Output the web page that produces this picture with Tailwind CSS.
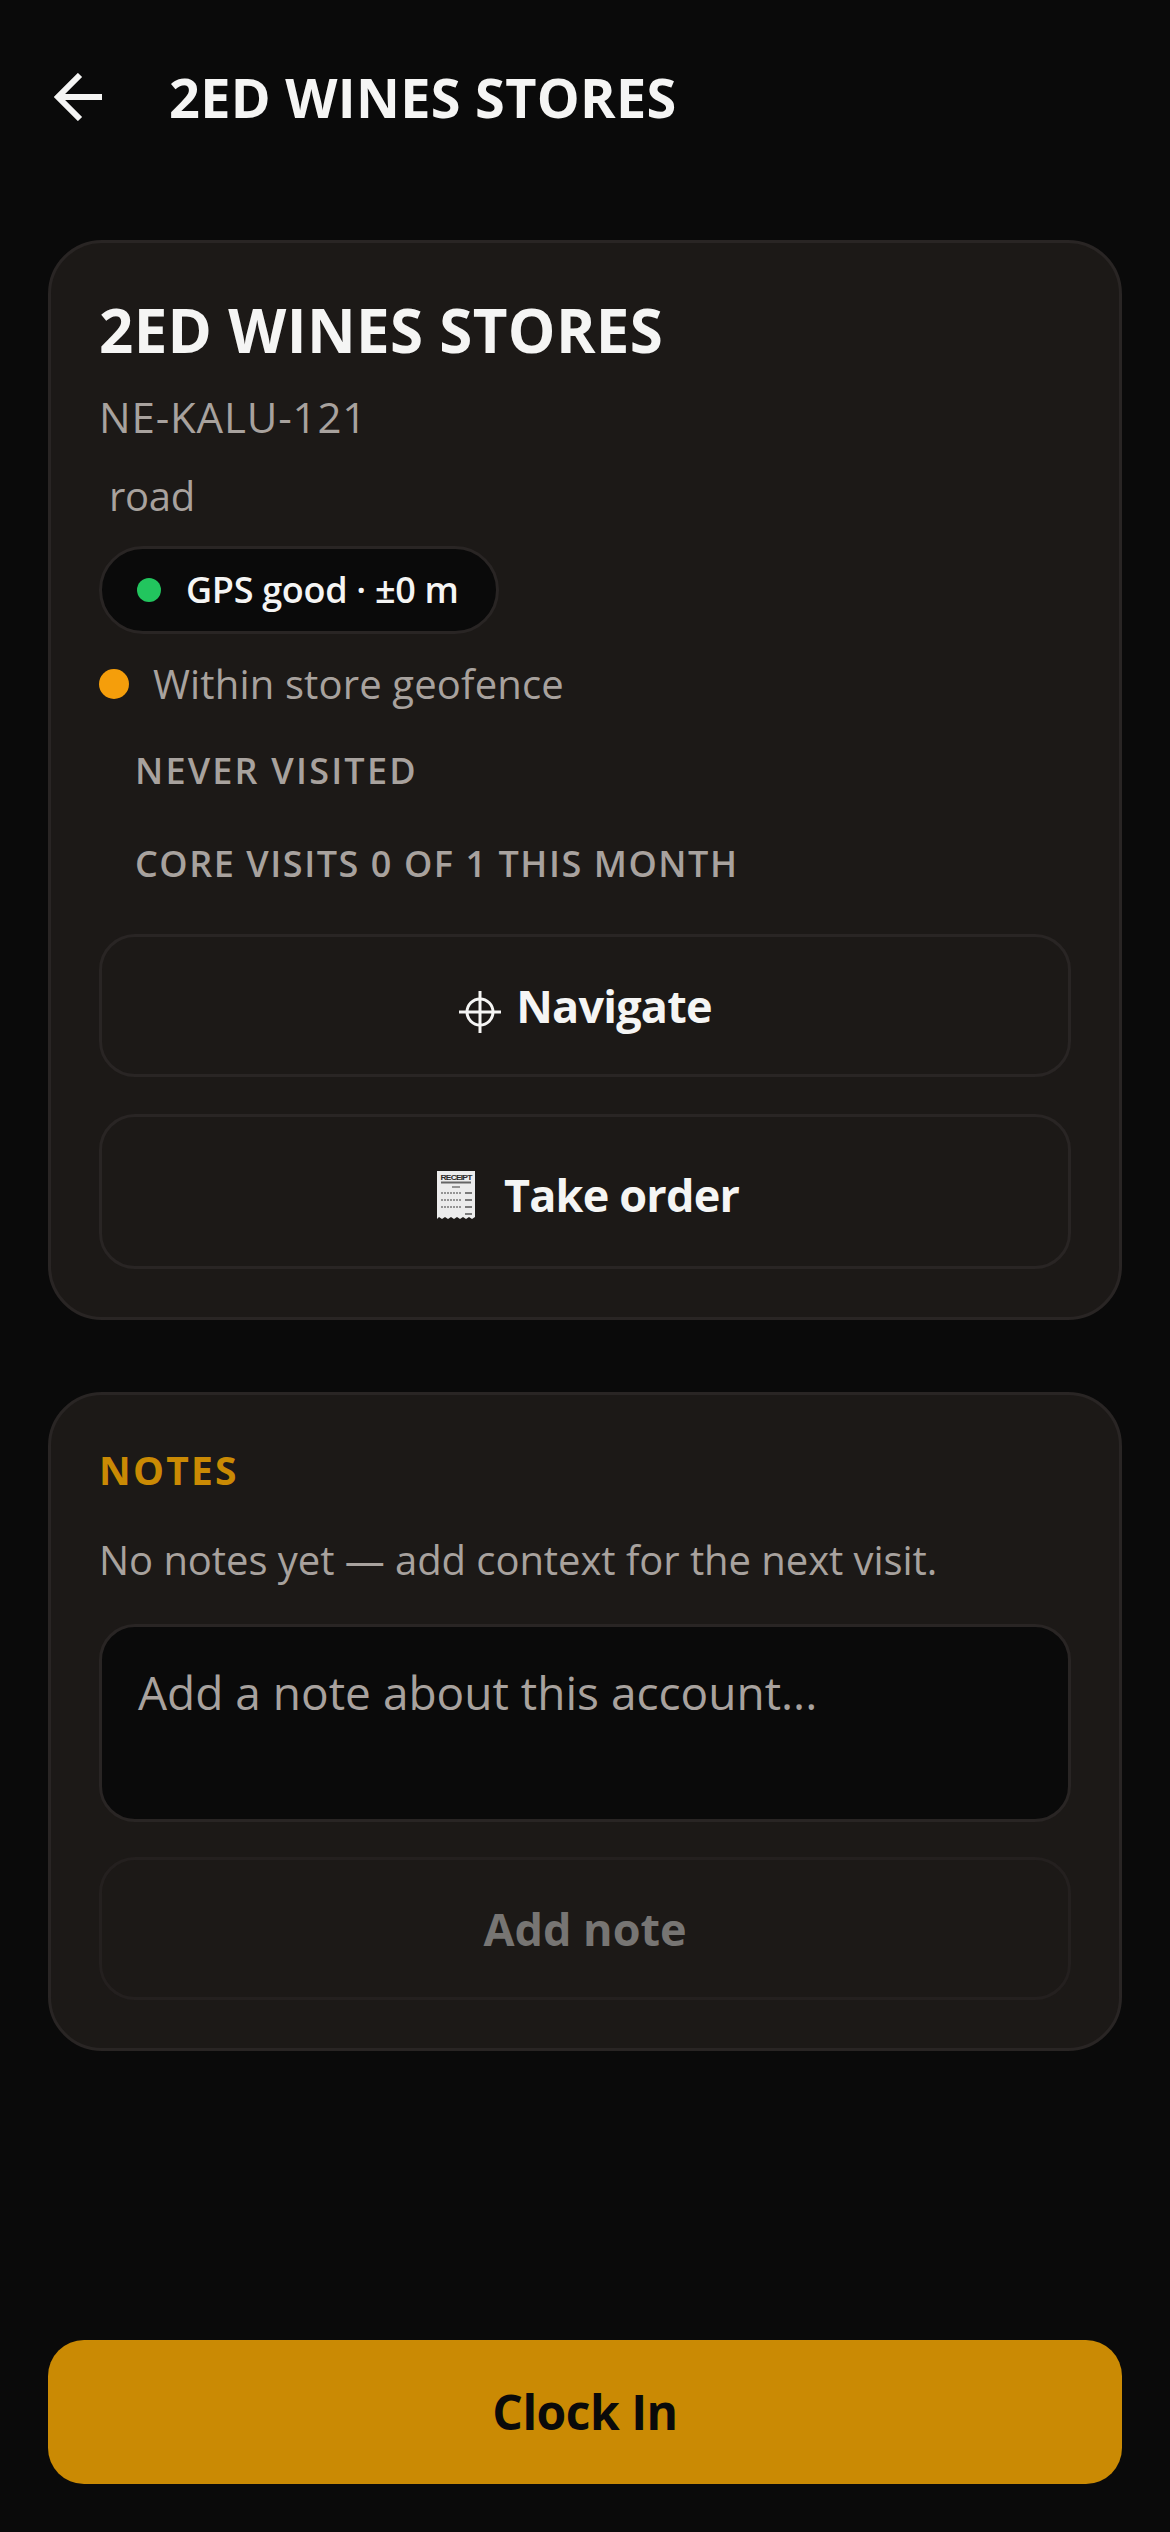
<!DOCTYPE html>
<html lang="en">
<head>
  <meta charset="UTF-8">
  <title>2ED WINES STORES</title>
  <script src="https://cdn.jsdelivr.net/npm/@tailwindcss/browser@4"></script>
</head>
<body class="w-[1170px] h-[2532px] flex flex-col bg-[#0a0a0a] text-[#f5f5f4] font-['Open_Sans',sans-serif] overflow-hidden">
  <!-- header -->
  <header class="h-[194px] shrink-0 flex items-center pl-[54px]">
    <svg class="w-[48px] h-[48px] shrink-0" viewBox="0 0 48 48" fill="none" stroke="#f5f5f4" stroke-width="6">
      <path d="M26 2 L4 24 L26 46 M4 24 H48" />
    </svg>
    <h1 class="ml-[67px] text-[54px] leading-[72px] font-bold tracking-[0.3px]">2ED WINES STORES</h1>
  </header>

  <main class="mt-[46px] px-[48px] flex flex-col gap-[72px]">
    <!-- store card -->
    <section class="h-[1080px] rounded-[54px] border-[3px] border-[#292524] bg-[#1c1917] px-[48px] pt-[48px] flex flex-col">
      <h2 class="h-[78px] flex items-center text-[60px] font-bold tracking-[0.35px]">2ED WINES STORES</h2>
      <p class="mt-[20px] h-[54px] flex items-center text-[42px] tracking-[0.85px] text-[#a8a29e]">NE-KALU-121</p>
      <p class="mt-[26px] h-[54px] flex items-center pl-[10px] text-[40px] tracking-[-0.3px] text-[#a8a29e]">road</p>
      <div class="mt-[23px] h-[88px] w-[400px] flex items-center rounded-full border-[3px] border-[#292524] bg-[#0a0a0a] pl-[35px]">
        <span class="w-[24px] h-[24px] rounded-full bg-[#22c55e]"></span>
        <span class="ml-[25px] text-[36px] font-semibold tracking-[-0.3px]">GPS good · ±0 m</span>
      </div>
      <div class="mt-[23px] h-[54px] flex items-center">
        <span class="w-[30px] h-[30px] rounded-full bg-[#f59e0b]"></span>
        <span class="ml-[24px] text-[40px] tracking-[0.15px] text-[#a8a29e]">Within store geofence</span>
      </div>
      <p class="mt-[36px] h-[48px] flex items-center pl-[36px] text-[36px] font-semibold tracking-[2.2px] text-[#a8a29e]">NEVER VISITED</p>
      <p class="mt-[45px] h-[48px] flex items-center pl-[36px] text-[36px] font-semibold tracking-[1.55px] text-[#a8a29e]">CORE VISITS 0 OF 1 THIS MONTH</p>
      <button class="mt-[46px] h-[143px] shrink-0 flex items-center justify-center gap-[15px] rounded-[36px] border-[3px] border-[#292524] pl-[1px] text-[45px] font-bold tracking-[-0.8px]">
        <svg class="w-[42px] h-[42px] mt-[13px]" viewBox="0 0 42 42" fill="none" stroke="#f5f5f4" stroke-width="3">
          <circle cx="21" cy="21" r="13" />
          <path d="M21 0 V42 M0 21 H42" />
        </svg>
        <span>Navigate</span>
      </button>
      <button class="mt-[37px] h-[155px] shrink-0 flex items-center justify-center gap-[29px] rounded-[36px] border-[3px] border-[#292524] pl-[6px] pt-[6px] text-[45px] font-bold tracking-[-0.8px]">
        <svg class="w-[38px] h-[48px]" viewBox="0 0 38 48">
          <path d="M0 0 H38 V46 L35 48 L32 46 L29 48 L26 46 L23 48 L20 46 L17 48 L14 46 L11 48 L8 46 L5 48 L2 46 L0 48 Z" fill="#ececec" />
          <text x="19" y="9" text-anchor="middle" font-size="8" font-weight="700" fill="#2c2c2c" font-family="Liberation Sans" textLength="31" lengthAdjust="spacingAndGlyphs">RECEIPT</text>
          <path d="M4 11.5 H34" stroke="#666" stroke-width="2" />
          <path d="M15 16 H23" stroke="#777" stroke-width="1.5" />
          <path d="M4 22 H24 M4 29 H24 M4 36 H24" stroke="#777" stroke-width="1.5" stroke-dasharray="2 1" />
          <path d="M28 22 H35 M28 29 H35 M28 36 H35 M28 43 H35" stroke="#555" stroke-width="1.5" />
        </svg>
        <span>Take order</span>
      </button>
    </section>

    <!-- notes card -->
    <section class="h-[659px] rounded-[54px] border-[3px] border-[#292524] bg-[#1c1917] px-[48px] pt-[48px] flex flex-col">
      <h3 class="h-[54px] flex items-center text-[39px] font-bold tracking-[2.2px] text-[#ca8a04]">NOTES</h3>
      <p class="mt-[36px] h-[54px] flex items-center text-[40px] tracking-[-0.06px] text-[#a8a29e]">No notes yet — add context for the next visit.</p>
      <textarea class="mt-[37px] h-[198px] shrink-0 resize-none rounded-[36px] border-[3px] border-[#292524] bg-[#0a0a0a] px-[36px] pt-[35px] text-[46px] leading-[60px] outline-none placeholder:text-[#a8a29e]" placeholder="Add a note about this account..."></textarea>
      <button class="mt-[35px] h-[143px] shrink-0 rounded-[36px] border-[3px] border-[#292524]/60 text-[45px] font-bold text-[#777573]">Add note</button>
    </section>
  </main>

  <!-- clock in -->
  <div class="mt-auto px-[48px] pb-[48px]">
    <button class="w-full h-[144px] rounded-[36px] bg-[#ca8a04] text-[48px] font-bold tracking-[-0.5px] text-[#0a0a0a]">Clock In</button>
  </div>
</body>
</html>
